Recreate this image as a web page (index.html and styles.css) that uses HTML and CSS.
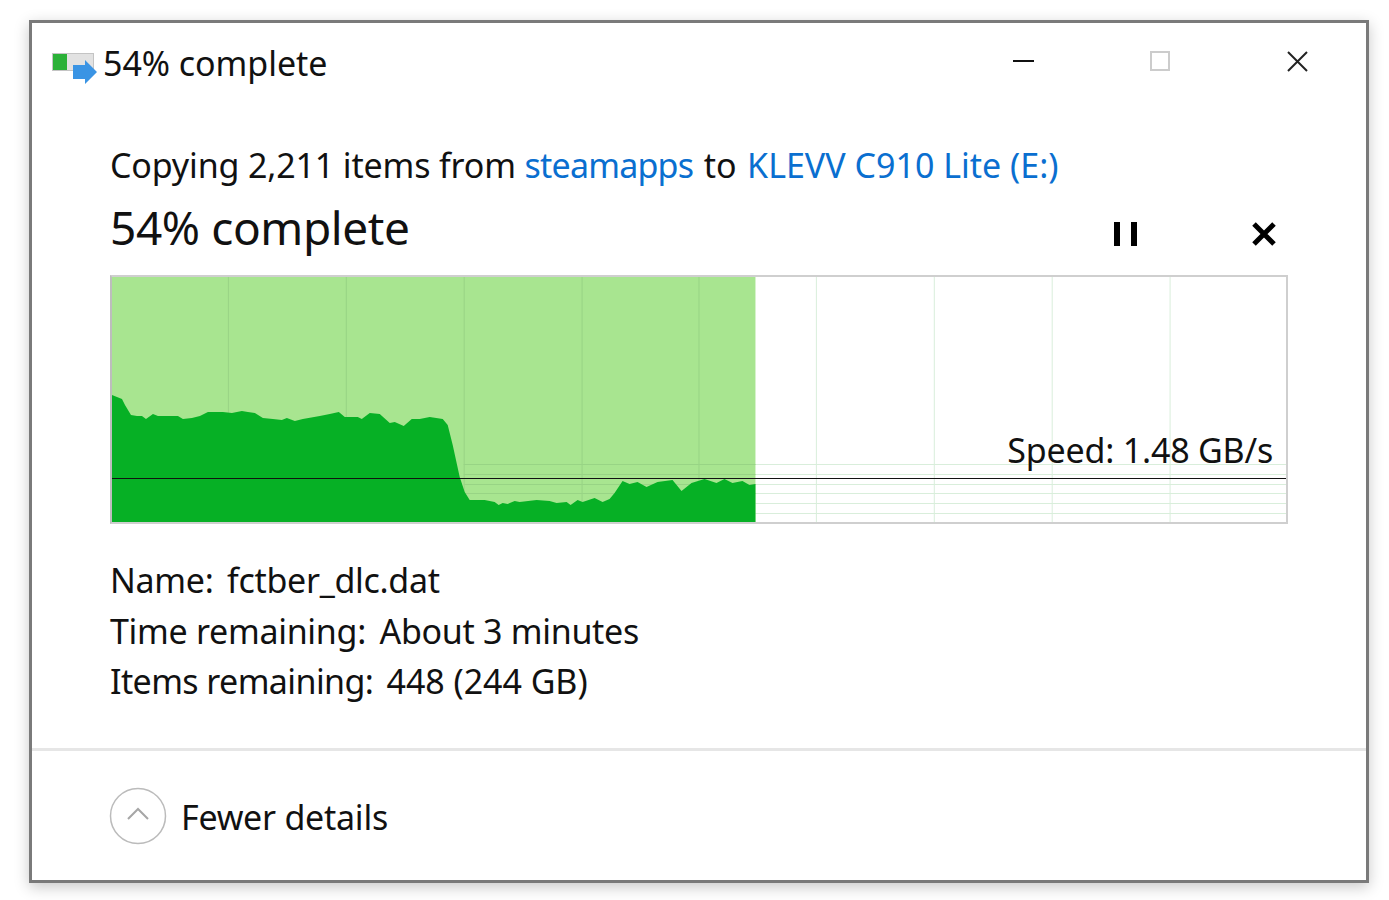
FILE: index.html
```html
<!DOCTYPE html>
<html lang="en">
<head>
    <meta charset="UTF-8">
    <meta name="viewport" content="width=device-width, initial-scale=1.0">
    <title>54% complete</title>
    <link rel="stylesheet" href="styles.css">
</head>
<body>

    <div class="window">

        <div class="titlebar">
            <svg class="app-icon" width="46" height="32" viewBox="0 0 46 32">
                <rect x="0.5" y="0.5" width="41" height="17" fill="#e2e2e2" stroke="#c4c4c4"/>
                <rect x="1" y="1" width="14" height="16" fill="#2bb138"/>
                <path d="M21 12H33V7L45 19L33 31V26H21Z" fill="#3a94e4"/>
            </svg>
            <span class="title-text">54% complete</span>
            <div class="window-buttons">
                <svg width="22" height="22" viewBox="0 0 22 22"><path d="M1 11H22" stroke="#111" stroke-width="2"/></svg>
                <svg width="22" height="22" viewBox="0 0 22 22"><rect x="2" y="2" width="18" height="18" fill="none" stroke="#ccc" stroke-width="2"/></svg>
                <svg width="22" height="22" viewBox="0 0 22 22"><path d="M2 2L21 21M21 2L2 21" stroke="#222" stroke-width="2" fill="none"/></svg>
            </div>
        </div>

        <div class="content">
            <p class="copying">Copying 2,211 items from <a class="source" href="#">steamapps</a> to <a class="target" href="#">KLEVV C910 Lite (E:)</a></p>

            <div class="status-row">
                <h1>54% complete</h1>
                <div class="status-buttons">
                    <svg width="24" height="24" viewBox="0 0 24 24"><path d="M0 0H6V24H0ZM17 0H23V24H17Z" fill="#000"/></svg>
                    <svg width="24" height="24" viewBox="0 0 24 24"><path d="M2 2L22 22M22 2L2 22" stroke="#000" stroke-width="5" fill="none"/></svg>
                </div>
            </div>

            <div class="chart">
                <svg class="chart-svg" viewBox="112 277 1175 245" preserveAspectRatio="none">
                    <g stroke="#d9eedb" stroke-width="1" fill="none">
                        <path d="M817 277V522M935 277V522M1053 277V522M1171 277V522"/>
                        <path d="M112 464.5H1287M112 474.5H1287M112 484.5H1287M112 493.5H1287M112 503.5H1287M112 513.5H1287"/>
                    </g>
                    <rect x="112" y="277" width="644" height="245" fill="#a8e590"/>
                    <g stroke="#98d485" stroke-width="1" fill="none">
                        <path d="M228.500 277V522M346.500 277V522M464.500 277V522M582.500 277V522M699.500 277V522"/>
                        <path d="M464 464.500H756M464 474.500H756M464 484.500H756M464 493.500H756"/>
                    </g>
                    <path fill="#06b025" d="M112 522V395L117 397L122 399L125 405L131 415L137 416L142 416L146 419L153 414L158 416L178 416L183 419L192 418L200 416L208 412L223 412L232 413L242 411L248 412L255 413L263 418L273 419L282 420L287 418L295 421L303 419L320 416L330 414L339 412L345 417L358 417L362 419L370 413L380 414L390 423L395 422L404 426L412 419L420 419L430 417L443 419L448 425L453 445L460 477L465 492L470 500L485 500L495 502L499 505L503 503L508 504L515 501L520 502L537 500L550 501L557 503L567 502L571 505L578 500L583 502L595 498L603 502L610 499L615 493L623 481L630 484L638 482L647 487L658 482L673 480L682 491L692 483L705 479L717 483L725 479L733 483L743 481L750 485L756 484V522Z"/>
                    <path d="M112 478.500H1287" stroke="#111" stroke-width="1" fill="none"/>
                </svg>
                <span class="speed">Speed: 1.48 GB/s</span>
            </div>

            <div class="details">
                <div>Name: <span class="value">fctber_dlc.dat</span></div>
                <div>Time remaining: <span class="value">About 3 minutes</span></div>
                <div class="items-row">Items remaining: <span class="value">448 (244 GB)</span></div>
            </div>
        </div>

        <div class="footer">
            <svg width="58" height="58" viewBox="0 0 58 58">
                <circle cx="29" cy="29" r="27.500" fill="none" stroke="#bbb" stroke-width="1.500"/>
                <path d="M19 32L29 22L39 32" fill="none" stroke="#a6a6a6" stroke-width="2"/>
            </svg>
            <span class="footer-text">Fewer details</span>
        </div>

    </div>

</body>
</html>
```

FILE: styles.css
```css
body {
    margin: 0;
    height: 900px;
    overflow: hidden;
    background-color: white;
    font-family: "Noto Sans", "Open Sans", sans-serif;
    color: #111;
}

.window {
    box-sizing: border-box;
    width: 1340px;
    height: 863px;
    margin: 20px 0 0 29px;
    border: 3px solid #7a7a7a;
    background-color: white;
    box-shadow: 0 4px 14px rgba(0, 0, 0, 0.22);
    display: flex;
    flex-direction: column;
}

/* Title bar */
.titlebar {
    height: 80px;
    display: flex;
    align-items: flex-start;
    flex-shrink: 0;
}

.app-icon {
    margin: 30px 0 0 20px;
}

.title-text {
    margin: 16px 0 0 5px;
    font-size: 34px;
    line-height: 48px;
    letter-spacing: -0.05px;
}

.window-buttons {
    margin: 27px 0 0 auto;
    padding-right: 58px;
    display: flex;
    gap: 115px;
}

/* Main area */
.content {
    padding: 0 78px 0 78px;
    flex: 1;
}

.copying {
    margin: 38px 0 0 0;
    font-size: 34px;
    line-height: 48px;
    letter-spacing: -0.15px;
    white-space: nowrap;
}

.copying a {
    color: #0a6fd0;
    text-decoration: none;
}

.copying .source {
    margin-right: 2px;
    letter-spacing: -0.8px;
}

.copying .target {
    margin-left: 2px;
    letter-spacing: 0;
}

.status-row {
    display: flex;
    justify-content: space-between;
    height: 60px;
    margin-top: 8px;
}

h1 {
    margin: 0;
    font-size: 46px;
    font-weight: normal;
    line-height: 60px;
    letter-spacing: -0.4px;
}

.status-buttons {
    display: flex;
    gap: 114px;
    padding: 25px 12px 0 0;
}

.chart {
    position: relative;
    box-sizing: border-box;
    height: 249px;
    margin-top: 18px;
    border: 2px solid #cfcfcf;
    border-left-color: #bdbdbd;
}

.chart-svg {
    display: block;
    width: 100%;
    height: 100%;
}

.speed {
    position: absolute;
    right: 13px;
    top: 149px;
    font-size: 34px;
    line-height: 48px;
    letter-spacing: -0.2px;
}

.details {
    margin-top: 31px;
    font-size: 34px;
    line-height: 50.500px;
    letter-spacing: -0.3px;
}

.details .value {
    margin-left: 5px;
}

.items-row {
    letter-spacing: -0.6px;
}

.items-row .value {
    letter-spacing: -0.05px;
}

/* Bottom strip */
.footer {
    flex-shrink: 0;
    height: 129px;
    border-top: 3px solid #e6e6e6;
    padding-left: 77px;
    display: flex;
    align-items: center;
    gap: 14px;
}

.footer-text {
    margin-top: 2px;
    font-size: 34px;
    line-height: 48px;
    letter-spacing: -0.25px;
}
```
